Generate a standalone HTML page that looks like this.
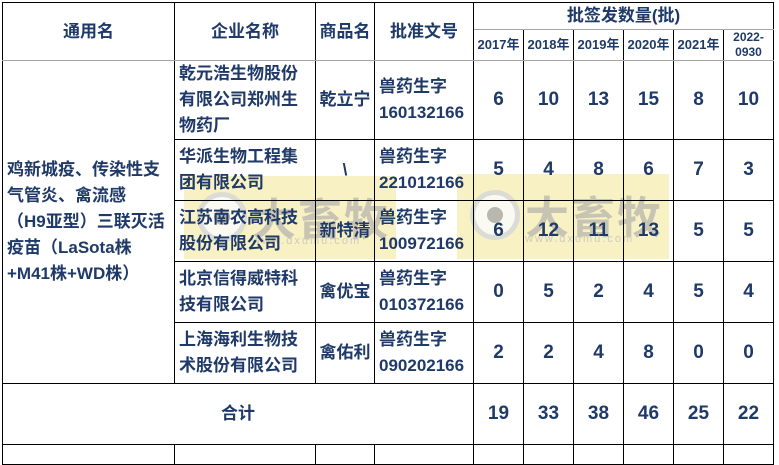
<!DOCTYPE html>
<html><head><meta charset="utf-8"><style>
body{margin:0;width:779px;height:445px;background:#fff;overflow:hidden;position:relative;font-family:"Liberation Sans","Noto Sans CJK SC",sans-serif;font-weight:bold;color:#1f3a68}
table{position:absolute;left:2px;top:2px;border-collapse:collapse;table-layout:fixed;z-index:2}
td{border:1px solid #000;padding:0;text-align:center;vertical-align:middle;font-size:17px;line-height:26px;overflow:hidden}
td.h{border-color:#000 #000 #a6a6a6 #000}
td.l{text-align:left;padding-left:4px}
td.y{font-size:13px;line-height:16px}
td.n{font-size:19px}
.wm{position:absolute;background:#f7f1c4;z-index:0}
.wmt{position:absolute;color:#c8c4b4;font-size:44px;font-weight:bold;font-family:"Noto Sans CJK SC",sans-serif;letter-spacing:2px;z-index:1}
.wmu{position:absolute;color:#cfcbbb;font-size:11px;font-weight:normal;letter-spacing:2px;z-index:1}
.c{position:absolute;width:50px;height:50px;border-radius:50%;border:5px solid #dcdcd6;box-sizing:border-box;background:#fbfaf2;z-index:1}
.c::after{content:"";position:absolute;left:12px;top:12px;width:16px;height:16px;border-radius:50%;background:#b8b8b0}
</style></head><body>
<div class="wm" style="left:184px;top:176px;width:212px;height:83px"></div>
<div class="c" style="left:197px;top:192px"></div>
<div class="wmt" style="left:252px;top:184px">大畜牧</div>
<div class="wmu" style="left:252px;top:235px">www.dxumu.com</div>
<div class="wm" style="left:457px;top:174px;width:212px;height:85px"></div>
<div class="c" style="left:470px;top:190px"></div>
<div class="wmt" style="left:525px;top:182px">大畜牧</div>
<div class="wmu" style="left:525px;top:233px">www.dxumu.com</div>
<table>
<colgroup><col style="width:172px"><col style="width:141px"><col style="width:59px"><col style="width:99px"><col style="width:50px"><col style="width:50px"><col style="width:50px"><col style="width:50px"><col style="width:50px"><col style="width:50px"></colgroup>
<tr style="height:26px"><td rowspan="2" class="h">通用名</td><td rowspan="2" class="h">企业名称</td><td rowspan="2" class="h">商品名</td><td rowspan="2" class="h">批准文号</td><td colspan="6" class="h">批签发数量(批)</td></tr>
<tr style="height:31px"><td class="h y">2017年</td><td class="h y">2018年</td><td class="h y">2019年</td><td class="h y">2020年</td><td class="h y">2021年</td><td class="h y" style="font-size:12px;line-height:15px">2022-<br>0930</td></tr>
<tr style="height:78px"><td rowspan="5" class="l" style="line-height:26px;border-top-color:#a6a6a6">鸡新城疫、传染性支<br>气管炎、禽流感<br>（H9亚型）三联灭活<br>疫苗（LaSota株<br>+M41株+WD株）</td><td class="l">乾元浩生物股份<br>有限公司郑州生<br>物药厂</td><td>乾立宁</td><td class="l">兽药生字<br>160132166</td><td class="n">6</td><td class="n">10</td><td class="n">13</td><td class="n">15</td><td class="n">8</td><td class="n">10</td></tr>
<tr style="height:61px"><td class="l">华派生物工程集<br>团有限公司</td><td>\</td><td class="l">兽药生字<br>221012166</td><td class="n">5</td><td class="n">4</td><td class="n">8</td><td class="n">6</td><td class="n">7</td><td class="n">3</td></tr>
<tr style="height:61px"><td class="l">江苏南农高科技<br>股份有限公司</td><td>新特清</td><td class="l">兽药生字<br>100972166</td><td class="n">6</td><td class="n">12</td><td class="n">11</td><td class="n">13</td><td class="n">5</td><td class="n">5</td></tr>
<tr style="height:61px"><td class="l">北京信得威特科<br>技有限公司</td><td>禽优宝</td><td class="l">兽药生字<br>010372166</td><td class="n">0</td><td class="n">5</td><td class="n">2</td><td class="n">4</td><td class="n">5</td><td class="n">4</td></tr>
<tr style="height:61px"><td class="l">上海海利生物技<br>术股份有限公司</td><td>禽佑利</td><td class="l">兽药生字<br>090202166</td><td class="n">2</td><td class="n">2</td><td class="n">4</td><td class="n">8</td><td class="n">0</td><td class="n">0</td></tr>
<tr style="height:61px"><td colspan="4">合计</td><td class="n">19</td><td class="n">33</td><td class="n">38</td><td class="n">46</td><td class="n">25</td><td class="n">22</td></tr>
<tr style="height:20px"><td></td><td></td><td></td><td></td><td></td><td></td><td></td><td></td><td></td><td></td></tr>
</table>
</body></html>
